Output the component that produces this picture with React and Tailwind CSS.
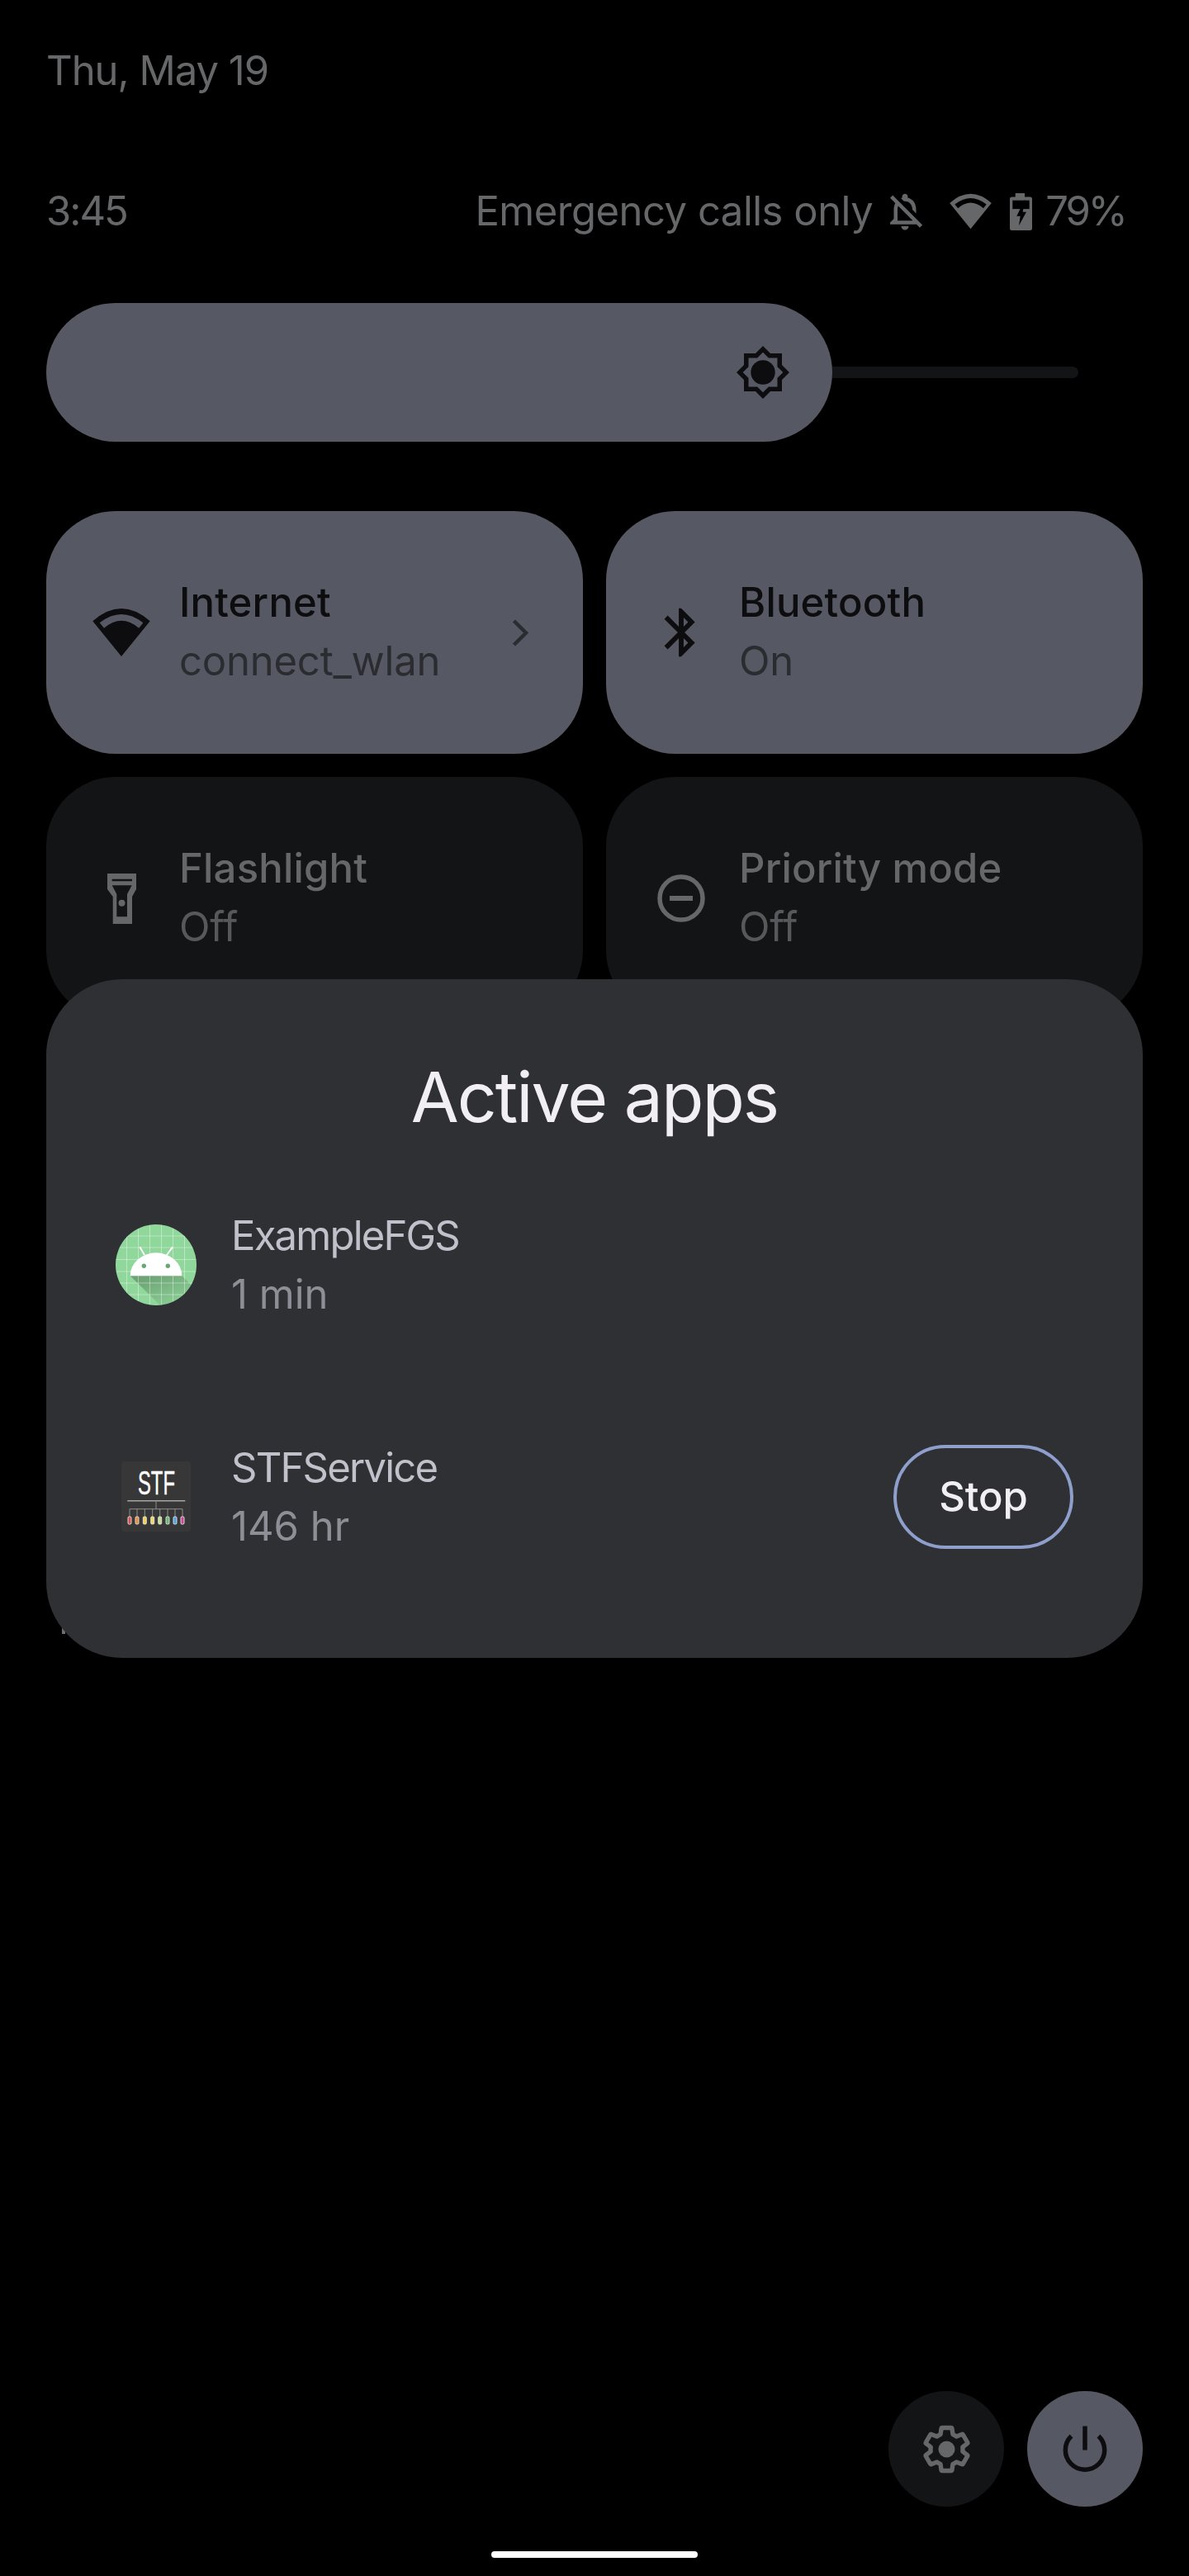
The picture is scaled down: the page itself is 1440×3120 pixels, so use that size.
const WifiIcon = ({ className }) => (
  <svg viewBox="0 0 70 58" className={className}>
    <path
      fill="currentColor"
      fillRule="evenodd"
      d="M0.3 15.3Q35 -15.3 69.7 15.3L35 58ZM8.7 17.3Q35 -3.3 61.3 17.3L56.3 23.7Q35 5.7 14 23.7Z"
    />
  </svg>
);

const BellOffIcon = ({ className }) => (
  <svg viewBox="0 0 24 24" className={className} fill="currentColor">
    <path d="M12 22c1.1 0 2-.9 2-2h-4c0 1.1.9 2 2 2zm0-15.5c2.49 0 4 2.02 4 4.5v.1l2 2V11c0-3.07-1.63-5.64-4.5-6.32V4c0-.83-.67-1.5-1.5-1.5s-1.5.67-1.5 1.5v.68c-.24.06-.47.15-.69.23l1.64 1.64c.18-.02.36-.05.55-.05zM5.41 3.35L4 4.76l2.81 2.81C6.29 8.57 6 9.74 6 11v5l-2 2v1h14.24l1.74 1.74 1.41-1.41L5.41 3.35zM16 17H8v-6c0-.68.12-1.32.34-1.9L16 16.76V17z" />
  </svg>
);

const BatteryIcon = ({ className }) => (
  <svg viewBox="0 0 27 45" className={className} fill="currentColor">
    <path d="M6.7 0H18V4.5H24.5Q27 4.5 27 7V42.5Q27 45 24.5 45H2.5Q0 45 0 42.5V7Q0 4.5 2.5 4.5H6.7Z" />
    <path fill="#000" d="M3.3 8.7H23.7V19.3H3.3Z" />
    <path fill="currentColor" d="M3.3 19.3H23.7V21H3.3Z" />
    <path fill="#000" d="M18.3 7.5L8.3 27.7H12.7L11 39.3L20 22.7H15.7Z" />
  </svg>
);

const SunIcon = ({ className }) => {
  const star = "32,0 41,9 55,9 55,23 64,32 55,41 55,55 41,55 32,64 23,55 9,55 9,41 0,32 9,23 9,9 23,9";
  return (
    <svg viewBox="0 0 64 64" className={className}>
      <polygon points={star} fill="#0d0d0f" />
      <polygon points={star} fill="#565963" transform="translate(32 32) scale(.76) translate(-32 -32)" />
      <circle cx="32" cy="32" r="14.7" fill="#0d0d0f" />
    </svg>
  );
};

const BluetoothIcon = ({ className }) => (
  <svg viewBox="0 0 24 24" className={className} fill="currentColor">
    <path d="M17.71 7.71L12 2h-1v7.59L6.41 5 5 6.41 10.59 12 5 17.59 6.41 19 11 14.41V22h1l5.71-5.71-4.3-4.29 4.3-4.29zM13 5.83l1.88 1.88L13 9.59V5.83zm1.88 10.46L13 18.17v-3.76l1.88 1.88z" />
  </svg>
);

const FlashlightIcon = ({ className }) => (
  <svg viewBox="0 0 35 61" className={className} fill="currentColor">
    <path
      fillRule="evenodd"
      d="M0 0H35V19L30 28V61H6.7V28L0 19ZM5.7 6.7V9.3H30V6.7ZM5.7 14.3L11.3 25V52.3H24V25L29.7 14.3Z"
    />
    <circle cx="17.5" cy="35.7" r="4" />
  </svg>
);

const PriorityIcon = ({ className }) => (
  <svg viewBox="0 0 58 58" className={className}>
    <circle cx="29" cy="29" r="26" fill="none" stroke="currentColor" strokeWidth="5.5" />
    <rect x="15" y="26" width="28" height="6" fill="currentColor" />
  </svg>
);

const GearIcon = ({ className }) => (
  <svg viewBox="0 0 24 24" className={className}>
    <path
      fill="none"
      stroke="currentColor"
      strokeWidth="2"
      strokeLinejoin="round"
      d="M19.14 12.94c.04-.3.06-.61.06-.94 0-.32-.02-.64-.07-.94l2.03-1.58c.18-.14.23-.41.12-.61l-1.92-3.32c-.12-.22-.37-.29-.59-.22l-2.39.96c-.5-.38-1.03-.7-1.62-.94l-.36-2.54c-.04-.24-.24-.41-.48-.41h-3.84c-.24 0-.43.17-.47.41l-.36 2.54c-.59.24-1.13.57-1.62.94l-2.39-.96c-.22-.08-.47 0-.59.22L2.74 8.87c-.12.21-.08.47.12.61l2.03 1.58c-.05.3-.09.63-.09.94s.02.64.07.94l-2.03 1.58c-.18.14-.23.41-.12.61l1.92 3.32c.12.22.37.29.59.22l2.39-.96c.5.38 1.03.7 1.62.94l.36 2.54c.05.24.24.41.48.41h3.84c.24 0 .44-.17.47-.41l.36-2.54c.59-.24 1.13-.56 1.62-.94l2.39.96c.22.08.47 0 .59-.22l1.92-3.32c.12-.22.07-.47-.12-.61l-2.01-1.58z"
    />
    <circle cx="12" cy="12" r="3.7" fill="currentColor" />
  </svg>
);

const PowerIcon = ({ className }) => (
  <svg viewBox="0 0 60 60" className={className} fill="none" stroke="currentColor" strokeWidth="5.5">
    <path d="M30 2.5V31.5" />
    <path d="M13.5 14.5A23.7 23.7 0 1 0 46.5 14.5" />
  </svg>
);

const AndroidAppIcon = () => (
  <svg viewBox="0 0 98 98" className="w-[98px] h-[98px]">
    <defs>
      <clipPath id="round">
        <circle cx="49" cy="49" r="49" />
      </clipPath>
      <linearGradient id="shade" x1="0.2" y1="0.1" x2="0.9" y2="0.9">
        <stop offset="0" stopColor="#000" stopOpacity="0.24" />
        <stop offset="1" stopColor="#000" stopOpacity="0.02" />
      </linearGradient>
    </defs>
    <g clipPath="url(#round)">
      <rect width="98" height="98" fill="#90d79b" />
      <path d="M17.7 62.3L54 98H98V80L80.3 62.3Z" fill="url(#shade)" />
      {[13.5, 27.5, 41.5, 55.5, 69.5, 83.5].map((x) => (
        <path key={x} d={`M${x} 0V98`} stroke="#fff" strokeOpacity="0.38" strokeWidth="1" />
      ))}
      {[14, 28, 42.5, 57, 71, 85].map((y) => (
        <path key={y} d={`M0 ${y}H98`} stroke="#fff" strokeOpacity="0.38" strokeWidth="1" />
      ))}
    </g>
    <path d="M17.7 62.3A31.3 28 0 0 1 80.3 62.3Z" fill="#fff" />
    <path d="M35 37L29.3 27.3M62 37L69 27.3" stroke="#fff" strokeWidth="2" />
    <circle cx="34.3" cy="50.3" r="2.7" fill="#69a874" />
    <circle cx="63.3" cy="50.3" r="2.7" fill="#69a874" />
  </svg>
);

const pills = [
  [10, "#d9504a"],
  [19, "#e58a3c"],
  [28.3, "#f2cf4e"],
  [37.7, "#eed95c"],
  [46.7, "#c5dc8c"],
  [56, "#67b46b"],
  [65, "#4f9fdc"],
  [74, "#c8458f"],
];

const StfAppIcon = () => (
  <svg viewBox="0 0 84 85" className="w-[84px] h-[85px]">
    <rect width="84" height="85" rx="4" fill="#373737" />
    {/* narrow lettering: squeeze the font sideways */}
    <text
      transform="translate(20 40.3) scale(0.85 1.43)"
      fill="#fff"
      stroke="#fff"
      strokeWidth="0.3"
      fontFamily="'Liberation Sans', sans-serif"
      fontSize="28"
    >
      STF
    </text>
    <path d="M7.3 47.7H77.3" stroke="#a5a5a5" strokeWidth="1.6" />
    <path d="M42 47.7V57.7M10 57.7H74" stroke="#8d8d8d" strokeWidth="1" />
    {pills.map(([x, color]) => (
      <g key={x}>
        <path d={`M${x} 57.7V67`} stroke="#8d8d8d" strokeWidth="1" />
        <rect x={x - 2} y="67" width="4" height="9" rx="1.2" fill={color} stroke="#e8e8e8" strokeWidth="0.9" />
      </g>
    ))}
  </svg>
);

const Tile = ({ icon, title, subtitle, active, chevron }) => (
  <div
    className={`flex items-center h-[294px] rounded-[84px] pl-[56px] ${
      active ? "bg-[#565963] text-[#0d0d0f]" : "bg-[#131416] text-[#666769]"
    }`}
  >
    <div className="w-[70px] flex justify-center shrink-0">{icon}</div>
    <div className="ml-[35px] mb-[2px]">
      <div className="text-[49px] leading-[71px] font-medium tracking-[0.2px]">{title}</div>
      <div className={`text-[49px] leading-[71px] tracking-[-0.2px] ${active ? "text-[#2b2c30]" : "text-[#57585b]"}`}>
        {subtitle}
      </div>
    </div>
    {chevron && (
      <svg viewBox="0 0 20 33" className="w-[20px] h-[33px] ml-auto mr-[66px]">
        <path d="M2.5 2L17 16.5L2.5 31" fill="none" stroke="#2b2c30" strokeWidth="4.5" />
      </svg>
    )}
  </div>
);

const AppRow = ({ icon, name, time, children }) => (
  <div className="flex items-center h-[281px]">
    <div className="w-[98px] flex justify-center shrink-0">{icon}</div>
    <div className="ml-[42px]">
      <div className="text-[49px] leading-[71px] tracking-[-1.8px] text-[#c0c1cb]">{name}</div>
      <div className="text-[49px] leading-[71px] text-[#8e8f96]">{time}</div>
    </div>
    {children}
  </div>
);

export default function App() {
  return (
    <div className="relative w-[1440px] h-[3120px] bg-black overflow-hidden flex flex-col px-[56px] font-['Inter',sans-serif]">
      {/* header */}
      <div className="pt-[56px] text-[49px] leading-[60px] tracking-[-1px] text-[#666769]">Thu, May 19</div>
      <div className="flex items-center h-[60px] mt-[110px] text-[49px] text-[#666769]">
        <span className="tracking-[-2px]">3:45</span>
        <span className="ml-auto tracking-[-0.5px]">Emergency calls only</span>
        <BellOffIcon className="w-[54px] h-[54px] ml-[12px]" />
        <WifiIcon className="w-[51px] h-[44px] ml-[27px]" />
        <BatteryIcon className="w-[27px] h-[45px] ml-[22px]" />
        <span className="ml-[16px] mr-[21px] tracking-[-3px]">79%</span>
      </div>

      {/* brightness */}
      <div className="flex items-center mt-[81px]">
        <div className="flex items-center justify-end w-[952px] h-[168px] rounded-[84px] bg-[#565963] pr-[52px]">
          <SunIcon className="w-[64px] h-[64px]" />
        </div>
        <div className="w-[298px] h-[14px] rounded-r-full bg-[#131416]"></div>
      </div>

      {/* tiles */}
      <div className="grid grid-cols-2 gap-x-[28px] gap-y-[28px] mt-[84px]">
        <Tile active chevron title="Internet" subtitle="connect_wlan" icon={<WifiIcon className="w-[70px] h-[58px]" />} />
        <Tile active title="Bluetooth" subtitle="On" icon={<BluetoothIcon className="w-[70px] h-[70px]" />} />
        <Tile title="Flashlight" subtitle="Off" icon={<FlashlightIcon className="w-[35px] h-[61px]" />} />
        <Tile title="Priority mode" subtitle="Off" icon={<PriorityIcon className="w-[58px] h-[58px]" />} />
      </div>

      {/* footer buttons */}
      <div className="flex justify-end gap-[28px] mt-auto">
        <div className="flex items-center justify-center w-[140px] h-[140px] rounded-full bg-[#131416] text-[#666769]">
          <GearIcon className="w-[65px] h-[65px]" />
        </div>
        <div className="flex items-center justify-center w-[140px] h-[140px] rounded-full bg-[#565963] text-[#0d0d0f]">
          <PowerIcon className="w-[60px] h-[60px]" />
        </div>
      </div>
      <div className="w-[250px] h-[8px] rounded-full bg-white mx-auto mt-[54px] mb-[22px]"></div>

      {/* stray glyph peeking out below the dialog */}
      <div className="absolute left-[75px] top-[1965px] w-[4px] h-[14px] bg-[#6c6e74]"></div>

      {/* dialog */}
      <div className="absolute left-[56px] top-[1186px] w-[1328px] h-[822px] rounded-[92px] bg-[#2f3034] px-[84px]">
        <div className="h-[205px] pt-[88px] text-center text-[84px] leading-[110px] tracking-[-2px] text-[#f1eff3]">
          Active apps
        </div>
        <AppRow icon={<AndroidAppIcon />} name="ExampleFGS" time="1 min" />
        <AppRow icon={<StfAppIcon />} name="STFService" time="146 hr">
          <button className="ml-auto w-[218px] h-[126px] rounded-full border-[4px] border-[#8e9fcc] text-[49px] font-medium text-[#f2eff3]">
            Stop
          </button>
        </AppRow>
      </div>
    </div>
  );
}
